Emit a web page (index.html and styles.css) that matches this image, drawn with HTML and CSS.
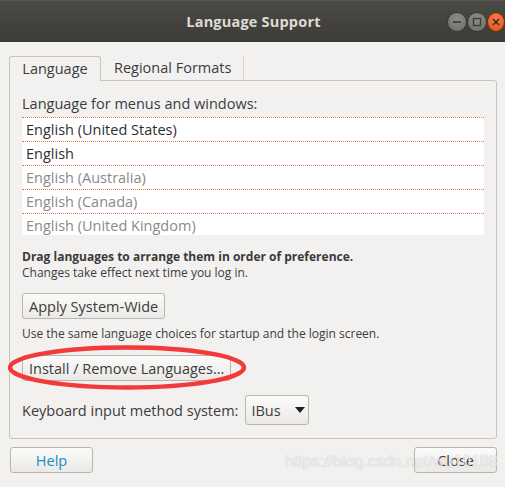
FILE: index.html
```html
<!DOCTYPE html>
<html>
<head>
<meta charset="utf-8">
<link rel="stylesheet" href="styles.css">
</head>
<body>
<div class="window">
  <div class="titlebar">
    <div class="title">Language Support</div>
    <div class="wbtns">
      <span class="wbtn wmin"><svg width="10" height="10" viewBox="0 0 10 10"><path d="M1 5h8" stroke="#3a3935" stroke-width="1.6"/></svg></span>
      <span class="wbtn wmax"><svg width="10" height="10" viewBox="0 0 10 10"><rect x="1.5" y="1.5" width="7" height="7" fill="none" stroke="#3a3935" stroke-width="1.3"/></svg></span>
      <span class="wbtn wclose"><svg width="10" height="10" viewBox="0 0 10 10"><path d="M2 2l6 6M8 2l-6 6" stroke="#4a2010" stroke-width="1.5"/></svg></span>
    </div>
  </div>
  <div class="body">
    <div class="tabs">
      <div class="tab active">Language</div>
      <div class="tab">Regional Formats</div>
    </div>
    <div class="panel">
      <div class="label">Language for menus and windows:</div>
      <div class="list">
        <div class="row">English (United States)</div>
        <div class="row">English</div>
        <div class="row dim">English (Australia)</div>
        <div class="row dim">English (Canada)</div>
        <div class="row dim last">English (United Kingdom)</div>
      </div>
      <div class="hint"><b>Drag languages to arrange them in order of preference.</b><br>Changes take effect next time you log in.</div>
      <div class="btnrow"><button class="btn">Apply System-Wide</button></div>
      <div class="note">Use the same language choices for startup and the login screen.</div>
      <div class="btnrow install"><button class="btn">Install / Remove Languages...</button></div>
      <div class="kbd">
        <span class="kbdlabel">Keyboard input method system:</span>
        <button class="btn combo">IBus<svg class="arrow" width="10" height="6" viewBox="0 0 10 6"><path d="M0 0h10L5 6z" fill="#1e1e1e"/></svg></button>
      </div>
    </div>
    <div class="actions">
      <button class="btn act help">Help</button>
      <button class="btn act">Close</button>
    </div>
  </div>
  <svg class="ellipse" width="505" height="487" viewBox="0 0 505 487"><ellipse cx="127" cy="367.5" rx="117" ry="20" fill="none" stroke="#f23a3a" stroke-width="4.5"/></svg>
  <div class="watermark">https://blog.csdn.net/wu10188</div>
</div>
</body>
</html>
```
FILE: styles.css
```css
* { box-sizing: border-box; }
html, body { margin: 0; padding: 0; }
body { width: 505px; height: 487px; overflow: hidden; background: #f2f1f0; font-family: "Open Sans", "Noto Sans", sans-serif; color: #3c3c3c; }
.window { position: relative; width: 505px; height: 487px; }
.titlebar { height: 42px; background: linear-gradient(#4b4a45, #3c3b37); display: flex; align-items: center; justify-content: center; position: relative; border-top: 1px solid #5a5853; }
.title { color: #dfdbd2; font-weight: bold; font-size: 14.5px; letter-spacing: 0.2px; margin-left: 2px; }
.wbtns { position: absolute; right: 0; top: 11px; display: flex; gap: 0; }
.wbtn { width: 20px; height: 20px; border-radius: 50%; display: flex; align-items: center; justify-content: center; }
.wmin, .wmax { background: radial-gradient(circle at 50% 30%, #8d8b85, #6e6c66); border: 1px solid #3a3934; }
.wclose { background: radial-gradient(circle at 50% 30%, #f4784a, #e2541e); border: 1px solid #7a2e10; width: 18px; }
.body { padding: 12px 8px 0 9px; }
.tabs { display: flex; height: 26px; align-items: flex-end; }
.tab { height: 25px; padding: 0 13px; font-size: 14.5px; line-height: 24px; display: flex; align-items: center; }
.tab.active { border: 1px solid #c7c4bf; border-bottom: none; border-radius: 3px 3px 0 0; background: #f2f1f0; padding: 0 13px; width: 92px; justify-content: center; position: relative; top: 1px; }
.tab:not(.active) { border-right: 1px solid #d6d3ce; height: 24px; padding: 0 12px 0 13px; }
.panel { border: 1px solid #c7c4bf; border-radius: 0 3px 3px 3px; height: 359px; padding: 13px 12px 0 12px; }
.label { font-size: 14.5px; line-height: 20px; height: 23px; }
.list { width: 462px; background: #fff; height: 118px; overflow: hidden; }
.row { height: 24px; border-top: 1px dotted #e2785a; font-size: 14.5px; line-height: 23px; padding-left: 4px; color: #2f2f2f; }
.row.dim { color: #8a8a8a; }
.hint { font-size: 12px; line-height: 16px; margin-top: 14px; }
.hint b { color: #3a3a3a; }
.btnrow { margin-top: 12px; }
.btn { font-family: inherit; font-size: 14.5px; color: #3c3c3c; height: 26px; padding: 0 6px; border: 1px solid #b9b6b1; border-radius: 3px; background: linear-gradient(#fbfbfa, #ebe9e6); display: inline-flex; align-items: center; justify-content: center; }
.note { font-size: 12px; line-height: 16px; margin-top: 7px; }
.install { margin-top: 13px; }
.kbd { display: flex; align-items: center; margin-top: 14px; }
.kbdlabel { font-size: 14.5px; margin-right: 7px; }
.combo { height: 30px; width: 64px; justify-content: flex-start; padding: 0 0 0 5px; }
.arrow { margin-left: 14px; flex-shrink: 0; }
.actions { display: flex; justify-content: space-between; margin-top: 8px; padding-right: 0; }
.act { width: 83px; }
.help { color: #1a8ac8; margin-left: 1px; }
.ellipse { position: absolute; left: 0; top: 0; pointer-events: none; }
.watermark { position: absolute; left: 285px; top: 453px; font-family: "Liberation Sans", Arial, sans-serif; font-size: 16px; color: rgba(250,250,250,0.8); text-shadow: 0 0 1px rgba(0,0,0,0.25); pointer-events: none; }
```
